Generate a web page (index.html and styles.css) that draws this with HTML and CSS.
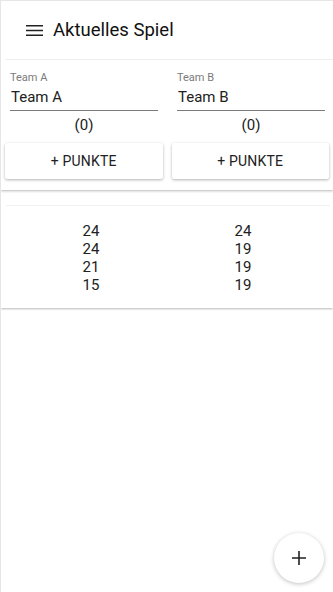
FILE: index.html
```html
<!DOCTYPE html>
<html lang="de">
<head>
<meta charset="utf-8">
<link rel="stylesheet" href="styles.css">
</head>
<body>
<div class="page">
  <header class="appbar">
    <svg class="menu" width="17" height="11" viewBox="0 0 17 11"><path d="M0 0.75H17M0 5.5H17M0 10.25H17" stroke="#212121" stroke-width="1.5"/></svg>
    <h1 class="title">Aktuelles Spiel</h1>
  </header>
  <section class="card teams">
    <div class="fields">
      <label class="field">
        <span class="field-label">Team A</span>
        <span class="field-input">Team A</span>
      </label>
      <label class="field">
        <span class="field-label">Team B</span>
        <span class="field-input">Team B</span>
      </label>
    </div>
    <div class="totals">
      <span>(0)</span>
      <span>(0)</span>
    </div>
    <div class="buttons">
      <button class="btn">+ PUNKTE</button>
      <button class="btn">+ PUNKTE</button>
    </div>
  </section>
  <section class="card scores">
    <div class="scores-head"></div>
    <div class="score-table">
      <div class="col"><span>24</span><span>24</span><span>21</span><span>15</span></div>
      <div class="col"><span>24</span><span>19</span><span>19</span><span>19</span></div>
    </div>
  </section>
  <button class="fab" aria-label="add">
    <svg width="14" height="14" viewBox="0 0 14 14"><path d="M7 0V14M0 7H14" stroke="#212121" stroke-width="1.6"/></svg>
  </button>
</div>
</body>
</html>
```
FILE: styles.css
```css
* { box-sizing: border-box; }
html, body { margin: 0; padding: 0; }
body {
  font-family: Roboto, "Noto Sans", sans-serif;
  color: #212121;
  background: #fff;
}
.page {
  position: relative;
  width: 333px;
  height: 592px;
  border-top: 1px solid #e6e6e6;
  border-left: 1px solid #e6e6e6;
  overflow: hidden;
}
.appbar {
  height: 59px;
  display: flex;
  align-items: center;
  gap: 10px;
  border-bottom: 1px solid #f3f3f3;
  margin-left: 5px;
  padding-left: 20px;
}
.menu { display: block; }
.title {
  margin: 0;
  font-size: 18.5px;
  font-weight: 400;
  color: #111;
}
.card {
  background: #fff;
  box-shadow: 0 1px 2px rgba(0,0,0,0.28);
}
.teams {
  padding: 11px 0 11px;
}
.fields {
  display: grid;
  grid-template-columns: 1fr 1fr;
  gap: 19px;
  padding: 0 8px 0 9px;
}
.field { display: flex; flex-direction: column; }
.field-label {
  font-size: 11px;
  color: #7a7a7a;
  line-height: 13px;
}
.field-input {
  font-size: 15px;
  line-height: 18px;
  padding: 4px 1px 4px;
  border-bottom: 1px solid #7b7b7b;
}
.totals {
  display: grid;
  grid-template-columns: 1fr 1fr;
  gap: 19px;
  padding: 5px 8px 0 9px;
  font-size: 15px;
  text-align: center;
  line-height: 18px;
}
.buttons {
  display: grid;
  grid-template-columns: 1fr 1fr;
  gap: 9px;
  padding: 0 4px;
  margin-top: 9px;
}
.btn {
  height: 36px;
  border: 0;
  border-radius: 2px;
  background: #fff;
  font-family: Roboto, sans-serif;
  font-size: 14px;
  color: #212121;
  box-shadow: 0 1px 3px rgba(0,0,0,0.3);
  letter-spacing: 0.2px;
}
.scores {
  margin-top: 3px;
  padding: 0 0 14px;
}
.scores-head {
  height: 13px;
  margin: 0 3px 0 5px;
  border-bottom: 1px solid #f2f2f2;
}
.score-table {
  display: grid;
  grid-template-columns: 1fr 1fr;
  margin: 16px 14px 0 14px;
  font-size: 15px;
}
.col {
  display: flex;
  flex-direction: column;
  align-items: center;
}
.fab {
  position: absolute;
  right: 9px;
  bottom: 9px;
  width: 50px;
  height: 50px;
  border-radius: 50%;
  border: 0;
  background: #fff;
  box-shadow: 0 1px 4px rgba(0,0,0,0.25);
  display: flex;
  align-items: center;
  justify-content: center;
  padding: 0;
}
```
